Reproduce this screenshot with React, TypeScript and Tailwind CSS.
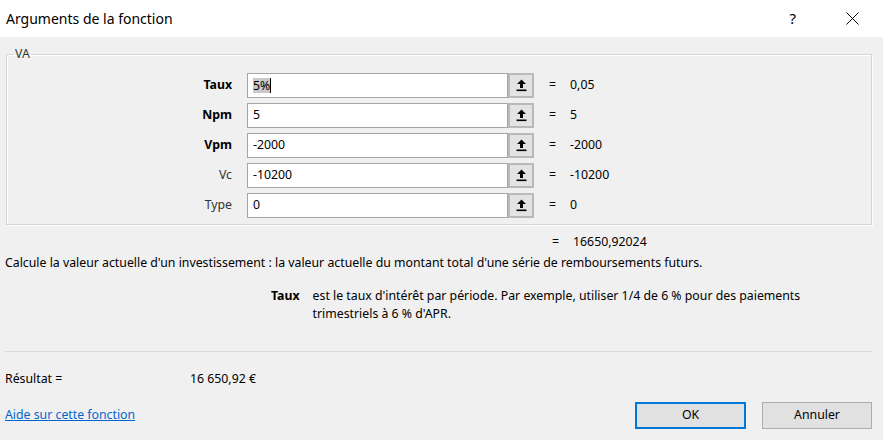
import React from 'react';

interface ArgRow {
  label: string;
  bold: boolean;
  value: string;
  result: string;
}

const rows: ArgRow[] = [
  { label: 'Taux', bold: true, value: '5%', result: '0,05' },
  { label: 'Npm', bold: true, value: '5', result: '5' },
  { label: 'Vpm', bold: true, value: '-2000', result: '-2000' },
  { label: 'Vc', bold: false, value: '-10200', result: '-10200' },
  { label: 'Type', bold: false, value: '0', result: '0' },
];

const CollapseIcon: React.FC = () => (
  <svg width="11" height="13" viewBox="0 0 11 13" fill="#000">
    <path d="M5.5 0.5 L10 5 H7 V9 H4 V5 H1 Z" />
    <rect x="0.5" y="10.5" width="10" height="1.6" />
  </svg>
);

const App: React.FC = () => {
  return (
    <div className="w-[883px] h-[440px] bg-[#f0f0f0] text-black overflow-hidden font-['Segoe_UI','Noto_Sans',sans-serif]">
      {/* Title bar */}
      <div className="h-[37px] bg-white flex items-center pl-[6px]">
        <span className="text-[14px]">Arguments de la fonction</span>
        <span className="ml-auto text-[15px] mr-[50px]">?</span>
        <svg width="13" height="13" viewBox="0 0 13 13" className="mr-[24px]">
          <path d="M0.5 0.5 L12.5 12.5 M12.5 0.5 L0.5 12.5" stroke="#000" strokeWidth="1" />
        </svg>
      </div>

      {/* Body */}
      <div className="h-[403px] border-b-[3px] border-[#6f6f6f] pl-[5px] text-[12.3px]">
        {/* VA group */}
        <fieldset className="mt-[9px] ml-[1px] w-[866px] border border-[#d4d4d4] shadow-[inset_1px_1px_0_#fff,1px_1px_0_#fff] pt-[11px] pb-[6px]">
          <legend className="ml-[7px] px-[1px] leading-[16px] text-[#333]">VA</legend>
          <div className="flex flex-col gap-[5px]">
            {rows.map((r, i) => (
              <div key={r.label} className="flex items-center h-[25px]">
                <div
                  className={`w-[226px] text-right pr-[1px] ${r.bold ? 'font-bold text-black' : 'text-[#333]'}`}
                >
                  {r.label}
                </div>
                <div className="ml-[14px] w-[261px] h-[25px] bg-white border border-[#a5a5a5] flex items-center pl-[5px]">
                  {i === 0 ? (
                    <>
                      <span className="bg-[#c8c8c8] leading-[15px]">{r.value}</span>
                      <span className="w-px h-[15px] bg-black" />
                    </>
                  ) : (
                    <span>{r.value}</span>
                  )}
                </div>
                <div className="w-[26px] h-[25px] bg-[#e3e3e3] border-2 border-[#b9b9b9] flex items-center justify-center">
                  <CollapseIcon />
                </div>
                <span className="ml-[15px]">=</span>
                <span className="ml-[14px]">{r.result}</span>
              </div>
            ))}
          </div>
        </fieldset>

        {/* Result of formula */}
        <div className="mt-[9px] leading-[16px] flex">
          <span className="ml-[547px]">=</span>
          <span className="ml-[14px]">16650,92024</span>
        </div>

        <p className="mt-[5px] leading-[16px]">
          Calcule la valeur actuelle d'un investissement : la valeur actuelle du montant total d'une série de remboursements futurs.
        </p>

        <div className="mt-[16px] flex pl-[266px] leading-[18px]">
          <span className="font-bold">Taux</span>
          <p className="ml-[13px]">
            est le taux d'intérêt par période. Par exemple, utiliser 1/4 de 6 % pour des paiements
            <br />
            trimestriels à 6 % d'APR.
          </p>
        </div>

        <div className="mt-[28px] w-[867px] h-px bg-[#dadada]" />

        <div className="mt-[19px] flex leading-[16px]">
          <span className="w-[185px]">Résultat =</span>
          <span>16 650,92 €</span>
        </div>

        {/* Footer */}
        <div className="mt-[15px] flex items-center pr-[11px]">
          <a href="#" className="text-[#0066cc] underline">
            Aide sur cette fonction
          </a>
          <button className="ml-auto w-[111px] h-[27px] bg-[#e1e1e1] border-2 border-[#0078d7] text-[12.3px]">
            OK
          </button>
          <button className="ml-[16px] w-[110px] h-[27px] bg-[#e1e1e1] border border-[#adadad] text-[12.3px]">
            Annuler
          </button>
        </div>
      </div>
    </div>
  );
};

export default App;
